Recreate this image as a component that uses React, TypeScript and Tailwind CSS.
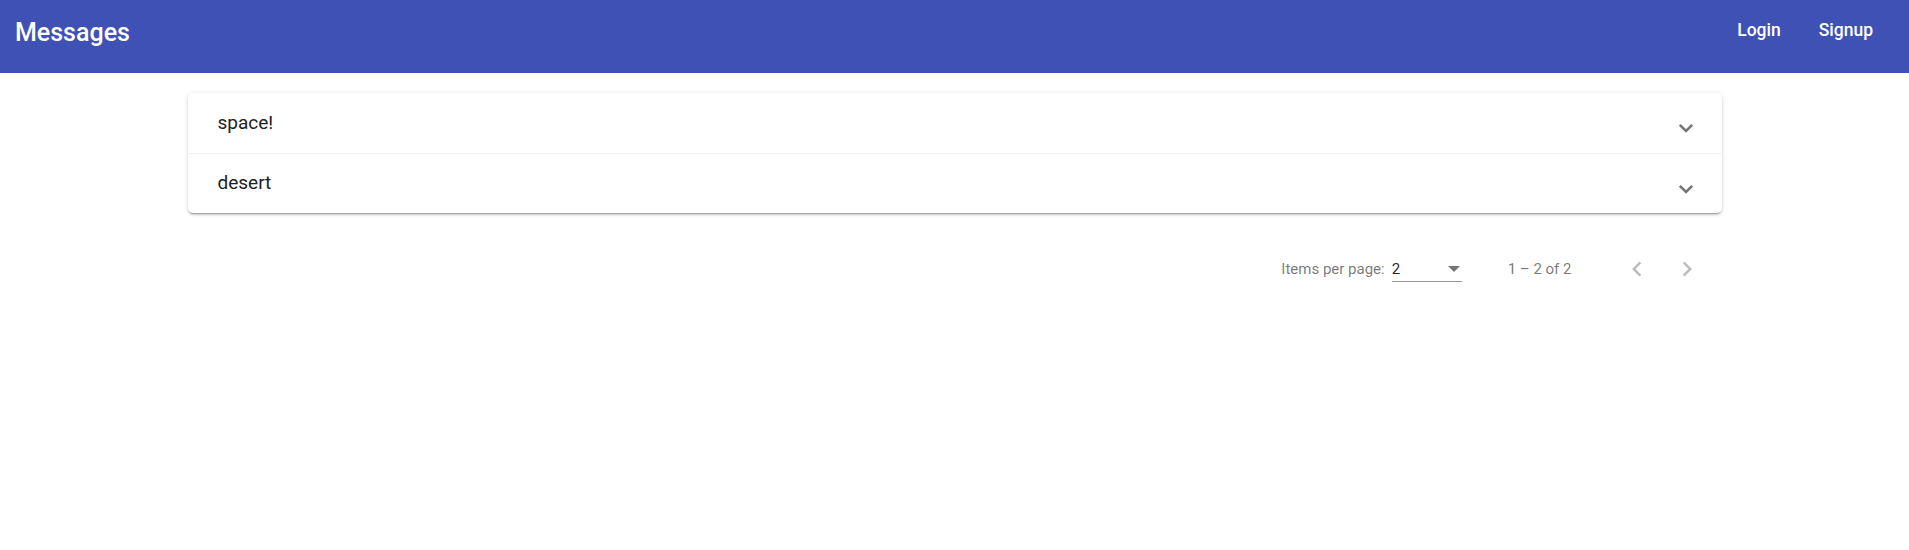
import React from "react";

function Chevron() {
  return (
    <svg width="16" height="10" viewBox="0 0 16 10" className="mt-[10px]">
      <polyline points="1.8,1.8 8,8 14.2,1.8" fill="none" stroke="rgba(0,0,0,0.54)" strokeWidth="2.6" />
    </svg>
  );
}

function NavIcon({ dir }: { dir: "left" | "right" }) {
  return (
    <svg width="30" height="30" viewBox="0 0 24 24" fill="rgba(0,0,0,0.26)">
      {dir === "left" ? (
        <path d="M15.41 7.41L14 6l-6 6 6 6 1.41-1.41L10.83 12z" />
      ) : (
        <path d="M8.59 16.59L10 18l6-6-6-6-1.41 1.41L13.17 12z" />
      )}
    </svg>
  );
}

export default function App() {
  const items = ["space!", "desert"];
  return (
    <div className="min-h-[550px] bg-white" style={{ fontFamily: "Roboto, 'Helvetica Neue', sans-serif" }}>
      <div className="flex h-[73px] items-start bg-[#3f51b5] pl-[15px] pr-[16px] pt-[18px] text-white">
        <div className="text-[25px] font-medium leading-[30px]">Messages</div>
        <div className="flex-1" />
        <div className="mt-[2px] flex">
          <button className="pl-[20px] pr-[18px] text-[17.5px] font-medium leading-[21px]">Login</button>
          <button className="px-[20px] text-[17.5px] font-medium leading-[21px]">Signup</button>
        </div>
      </div>

      <div className="mx-auto mt-[20px] w-[1534px] rounded-[5px] bg-white shadow-[0_3px_1px_-2px_rgba(0,0,0,0.2),0_2px_2px_0_rgba(0,0,0,0.14),0_1px_5px_0_rgba(0,0,0,0.12)]">
        {items.map((t, i) => (
          <div
            key={t}
            className={
              "flex h-[60px] items-center justify-between pl-[30px] pr-[28px] " +
              (i > 0 ? "border-t border-[#f0f0f0]" : "")
            }
          >
            <span className="text-[19px] text-[#212121]">{t}</span>
            <Chevron />
          </div>
        ))}
      </div>

      <div className="mx-auto mt-[21px] flex h-[70px] w-[1534px] items-center justify-end px-[10px] text-[15px] text-[rgba(0,0,0,0.54)]">
        <span className="mr-[7px]">Items per page:</span>
        <div className="mt-[4px] flex w-[70px] items-center justify-between border-b border-[rgba(0,0,0,0.42)] pb-[3px] leading-[18px]">
          <span className="text-[rgba(0,0,0,0.87)]">2</span>
          <span className="mr-[2px] h-0 w-0 border-x-[6.25px] border-t-[6.25px] border-x-transparent border-t-[rgba(0,0,0,0.54)]" />
        </div>
        <span className="ml-[46px] mr-[40px]">1 – 2 of 2</span>
        <button className="flex h-[50px] w-[50px] items-center justify-center">
          <NavIcon dir="left" />
        </button>
        <button className="flex h-[50px] w-[50px] items-center justify-center">
          <NavIcon dir="right" />
        </button>
      </div>
    </div>
  );
}
